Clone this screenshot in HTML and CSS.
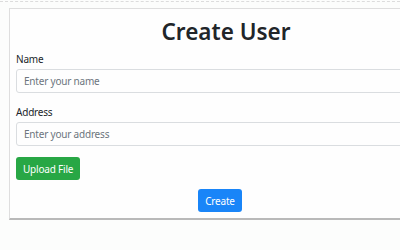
FILE: index.html
```html
<!DOCTYPE html>
<html lang="en">
<head>
  <meta charset="UTF-8" />
  <title>Create User</title>
  <link rel="stylesheet" href="styles.css">
</head>
<body>
  <div class="topline"></div>

  <div class="card">
    <h1 class="title">Create User</h1>

    <div class="form-group">
      <label for="name">Name</label>
      <input type="text" id="name" class="input-field" placeholder="Enter your name">
    </div>

    <div class="form-group">
      <label for="address">Address</label>
      <input type="text" id="address" class="input-field" placeholder="Enter your address">
    </div>

    <button class="button green upload">Upload File</button>

    <div class="actions">
      <button class="button blue">Create</button>
    </div>
  </div>
</body>
</html>
```

FILE: styles.css
```css
html, body {
  margin: 0;
  background-color: #fcfdfc;
  font-family: 'Noto Sans', sans-serif;
  color: #212529;
  overflow: hidden;
}

.topline {
  height: 1px;
  margin-top: 1px;
  border-top: 1px dashed #dcdcdc;
}

.card {
  width: 434px;
  margin: 5px 0 0 9px;
  padding: 6px;
  background-color: #fefefe;
  border: 1px solid #dedede;
  border-bottom: 2px solid #b9b9b9;
  box-sizing: border-box;
}

.title {
  margin: 2px 0 5px;
  text-align: center;
  font-size: 22.5px;
  font-weight: 600;
  line-height: 30px;
}

.form-group {
  display: flex;
  flex-direction: column;
  margin-bottom: 12px;
}

.form-group label {
  font-size: 10px;
  letter-spacing: -0.2px;
  line-height: 14px;
  margin-bottom: 3px;
}

.input-field {
  height: 24px;
  padding: 0 7px;
  font-family: inherit;
  font-size: 10px;
  letter-spacing: -0.2px;
  color: #495057;
  border: 1px solid #dadde0;
  border-radius: 3px;
  background-color: #fefefe;
  box-sizing: border-box;
}

.input-field::placeholder {
  color: #6c757d;
}

.button {
  display: block;
  height: 23px;
  padding: 0 7px;
  font-family: inherit;
  font-size: 10px;
  letter-spacing: -0.2px;
  color: #fff;
  border: none;
  border-radius: 3px;
}

.upload {
  margin-top: -1px;
}

.green {
  background-color: #28a745;
}

.blue {
  background-color: #1985f8;
}

.actions {
  display: flex;
  justify-content: center;
  margin-top: 9px;
  padding-right: 12px;
}
```
